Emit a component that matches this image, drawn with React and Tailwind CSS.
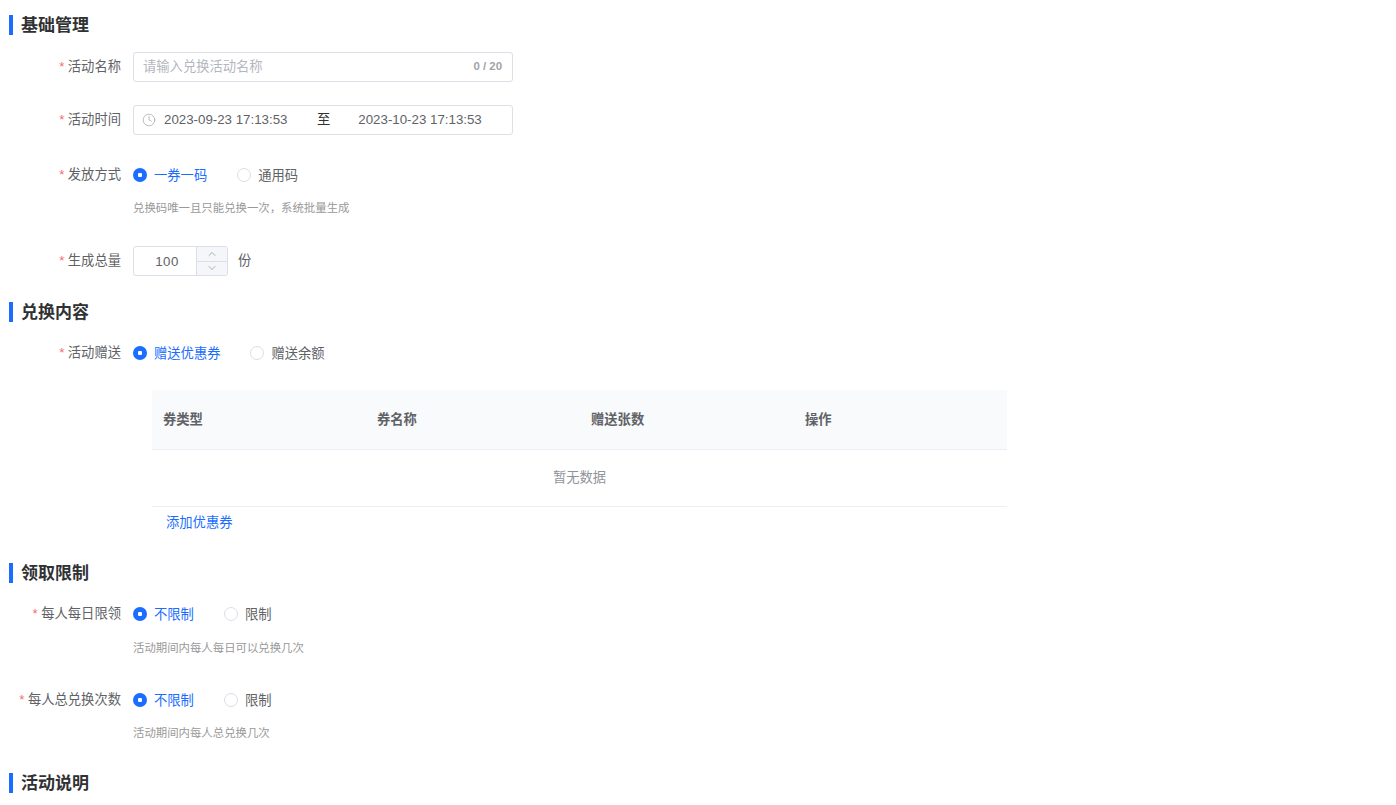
import React from "react";
import { Clock, ChevronUp, ChevronDown } from "lucide-react";

const SectionTitle = ({ title, className = "" }) => (
  <div className={`flex h-[20px] items-center ${className}`}>
    <div className="h-[20px] w-[4px] bg-[#1a6dff]"></div>
    <span className="ml-[8px] pt-[1px] text-[17px] font-bold text-[#303133]">{title}</span>
  </div>
);

const FormRow = ({ label, className = "", children }) => (
  <div className={`flex items-center ${className}`}>
    <label className="w-[112px] shrink-0 text-right text-[13.3px] text-[#606266]">
      <span className="mr-[3.5px] text-[#f56c6c]">*</span>
      {label}
    </label>
    <div className="ml-[12px] flex items-center">{children}</div>
  </div>
);

const Radio = ({ label, checked, className = "" }) => (
  <label className={`flex items-center ${className}`}>
    {checked ? (
      <span className="flex h-[14px] w-[14px] items-center justify-center rounded-full bg-[#1a6dff]">
        <span className="h-[4px] w-[4px] rounded-[1px] bg-white"></span>
      </span>
    ) : (
      <span className="h-[14px] w-[14px] rounded-full border border-[#dcdee8] bg-white"></span>
    )}
    <span className={`ml-[7px] pt-[1px] text-[13.3px] ${checked ? "text-[#1a6dff]" : "text-[#606266]"}`}>{label}</span>
  </label>
);

const Help = ({ text, className = "" }) => (
  <p className={`ml-[124px] text-[11.4px] leading-[16px] text-[#999999] ${className}`}>{text}</p>
);

export default function App() {
  return (
    <div className="h-screen overflow-hidden bg-white pl-[9px] pt-[15px] font-['Liberation_Sans','Noto_Sans_CJK_SC',sans-serif]">
      <SectionTitle title="基础管理" />

      <FormRow label="活动名称" className="mt-[17px] h-[30px]">
        <div className="flex h-[30px] w-[380px] items-center justify-between rounded-[3px] border border-[#dcdee8] pl-[9px] pr-[10px]">
          <span className="text-[13.3px] text-[#b4b6bd]">请输入兑换活动名称</span>
          <span className="text-[11.4px] font-bold text-[#a0a3a8]">0 / 20</span>
        </div>
      </FormRow>

      <FormRow label="活动时间" className="mt-[23px] h-[30px]">
        <div className="flex h-[30px] w-[380px] items-center rounded-[3px] border border-[#dcdee8] pl-[8px] text-[13.3px] text-[#606266]">
          <Clock size={14} strokeWidth={1.2} className="text-[#a0a3ab]" />
          <span className="ml-[8px] w-[124px] whitespace-nowrap">2023-09-23 17:13:53</span>
          <span className="ml-[29px] text-[#303133]">至</span>
          <span className="ml-[28px] whitespace-nowrap">2023-10-23 17:13:53</span>
        </div>
      </FormRow>

      <FormRow label="发放方式" className="mt-[30px] h-[20px]">
        <Radio label="一券一码" checked />
        <Radio label="通用码" className="ml-[30px]" />
      </FormRow>
      <Help text="兑换码唯一且只能兑换一次，系统批量生成" className="mt-[15px]" />

      <FormRow label="生成总量" className="mt-[30px] h-[30px]">
        <div className="flex h-[30px] w-[95px] overflow-hidden rounded-[3px] border border-[#dcdee8]">
          <div className="flex flex-1 items-center justify-center pl-[4px] pt-[2px] text-[13.3px] tracking-[0.5px] text-[#606266]">100</div>
          <div className="flex w-[31px] flex-col border-l border-[#dcdee8] bg-[#f5f6fa] text-[#80838a]">
            <div className="flex flex-1 items-center justify-center border-b border-[#dcdee8]">
              <ChevronUp size={12} strokeWidth={1.3} />
            </div>
            <div className="flex flex-1 items-center justify-center">
              <ChevronDown size={12} strokeWidth={1.3} />
            </div>
          </div>
        </div>
        <span className="ml-[10px] text-[13.3px] text-[#606266]">份</span>
      </FormRow>

      <SectionTitle title="兑换内容" className="mt-[26px]" />

      <FormRow label="活动赠送" className="mt-[21px] h-[20px]">
        <Radio label="赠送优惠券" checked />
        <Radio label="赠送余额" className="ml-[30px]" />
      </FormRow>

      <div className="ml-[143px] mt-[27px] w-[855px]">
        <div className="grid h-[60px] grid-cols-[214px_214px_214px_213px] items-center border-b border-[#ebeef5] bg-[#f9fafc] text-[13.3px] font-bold text-[#606266]">
          <div className="pl-[11px]">券类型</div>
          <div className="pl-[11px]">券名称</div>
          <div className="pl-[11px]">赠送张数</div>
          <div className="pl-[11px]">操作</div>
        </div>
        <div className="flex h-[57px] items-center justify-center border-b border-[#ebeef5] text-[13.3px] text-[#909399]">
          暂无数据
        </div>
        <div className="mt-[7px] pl-[14px] text-[13.3px] leading-[18px] text-[#1a6dff]">添加优惠券</div>
      </div>

      <SectionTitle title="领取限制" className="mt-[31px]" />

      <FormRow label="每人每日限领" className="mt-[21px] h-[20px]">
        <Radio label="不限制" checked />
        <Radio label="限制" className="ml-[30px]" />
      </FormRow>
      <Help text="活动期间内每人每日可以兑换几次" className="mt-[16px]" />

      <FormRow label="每人总兑换次数" className="mt-[34px] h-[20px]">
        <Radio label="不限制" checked />
        <Radio label="限制" className="ml-[30px]" />
      </FormRow>
      <Help text="活动期间内每人总兑换几次" className="mt-[15px]" />

      <SectionTitle title="活动说明" className="mt-[32px]" />
    </div>
  );
}
